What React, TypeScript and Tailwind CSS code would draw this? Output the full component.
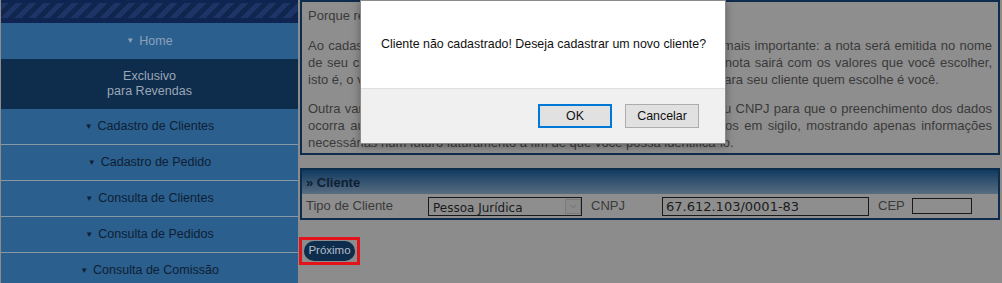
const menu = [
  'Cadastro de Clientes',
  'Cadastro de Pedido',
  'Consulta de Clientes',
  'Consulta de Pedidos',
  'Consulta de Comissão',
]

function Caret() {
  return <span className="mr-[5px] inline-block text-[8px] leading-none align-middle">▼</span>
}

function Line({ children, last }: { children: React.ReactNode; last?: boolean }) {
  return (
    <div className={last ? 'text-left' : 'text-justify [text-align-last:justify]'}>{children}</div>
  )
}

export default function App() {
  return (
    <div
      className="relative flex h-[283px] w-[1002px] overflow-hidden bg-[#8c8c8c] text-[13px]"
      style={{ fontFamily: '"Liberation Sans", Arial, sans-serif' }}
    >
      {/* sidebar */}
      <aside className="ml-px flex w-[297px] shrink-0 flex-col bg-[#2a5f8e] text-[12.5px]">
        <div className="h-[23px] shrink-0 bg-[#0f2450] py-[3px]">
          <div className="h-[15px] bg-[image:repeating-linear-gradient(135deg,#1c3466_0px,#1c3466_5px,#10264f_5px,#10264f_10px)]" />
        </div>
        <div className="flex h-[36px] shrink-0 items-center justify-center text-[#8da2b9]">
          <Caret />
          Home
        </div>
        <div className="flex h-[50px] shrink-0 flex-col items-center justify-center bg-[#0e2c4c] leading-[15px] text-[#9ba7b6]">
          <span>Exclusivo</span>
          <span>para Revendas</span>
        </div>
        {menu.map((item) => (
          <div
            key={item}
            className="flex h-[36px] shrink-0 items-center justify-center border-b border-[#8797a6] text-[#0f1e33]"
          >
            <Caret />
            {item}
          </div>
        ))}
      </aside>

      {/* content */}
      <main className="ml-[2px] flex w-[700px] flex-col">
        <section className="h-[155px] shrink-0 border-2 border-[#0e2c4c] bg-[#8e8e8e] px-[6px] pt-[5px] leading-[17px] text-[#3a3a3a]">
          <p>Porque revender com a gente?</p>
          <div className="mt-[13px]">
            <Line>Ao cadastrar seu cliente em nosso sistema, você garante o que há de mais importante: a nota será emitida no nome</Line>
            <Line>de seu cliente e não em seu nome ou de sua empresa. Além disso, a nota sairá com os valores que você escolher,</Line>
            <Line last>isto é, o valor de cada produto e também o total que será apresentado para seu cliente quem escolhe é você.</Line>
          </div>
          <div className="mt-[12px]">
            <Line>Outra vantagem de cadastrar seu cliente é que basta informar o CPF ou CNPJ para que o preenchimento dos dados</Line>
            <Line>ocorra automaticamente. Todos os dados do seu cliente serão mantidos em sigilo, mostrando apenas informações</Line>
            <Line last>necessárias num futuro faturamento a fim de que você possa identificá-lo.</Line>
          </div>
        </section>

        <section className="mt-[13px] h-[52px] shrink-0 border-2 border-[#0e2c4c] bg-[#8e8e8e]">
          <div className="flex h-[24px] items-center bg-linear-to-b from-[#0f3b61] to-[#586d80] px-[4px] pt-[2px] text-[13px] font-bold text-[#0f1e33]">
            » Cliente
          </div>
          <div className="flex h-[24px] items-center px-[4px] text-[#3a3a3a]">
            <span className="w-[122px]">Tipo de Cliente</span>
            <div
              className="flex h-[19px] w-[154px] items-center border border-[#1a1a1a] pl-[4px] text-[12px] text-[#1a1a1a]"
              style={{ fontFamily: '"DejaVu Sans", Verdana, sans-serif' }}
            >
              <span className="flex-1 pt-[3px]">Pessoa Jurídica</span>
              <span className="flex h-[15px] w-[16px] items-center justify-center border border-[#7a7a7a] bg-[#8a8a8a] text-[9px] text-[#555]">
                ⌵
              </span>
            </div>
            <span className="ml-[9px] w-[71px]">CNPJ</span>
            <div
              className="flex h-[19px] w-[207px] items-center border border-[#1a1a1a] pl-[3px] pt-[2px] text-[13px] text-[#1c1c1c]"
              style={{ fontFamily: '"DejaVu Sans", Verdana, sans-serif' }}
            >
              67.612.103/0001-83
            </div>
            <span className="ml-[9px] w-[34px]">CEP</span>
            <div className="h-[16px] w-[60px] border border-[#1a1a1a]" />
          </div>
        </section>

        <div className="-ml-px mt-[17px] flex h-[28px] w-[61px] shrink-0 items-center justify-center border-[3px] border-[#e3121b]">
          <button className="h-[20px] w-[51px] rounded-full bg-[#0e2c4c] text-[11.5px] text-[#b4beca]">Próximo</button>
        </div>
      </main>

      {/* confirm dialog */}
      <div className="absolute left-[360px] top-0 flex h-[144px] w-[366px] flex-col border border-[#8a8a8a] bg-white shadow-[0_2px_8px_rgba(0,0,0,0.35)]">
        <div className="flex h-[87px] items-center pl-[20px] text-[12.4px] text-[#111]">
          Cliente não cadastrado! Deseja cadastrar um novo cliente?
        </div>
        <div className="flex flex-1 items-center justify-end gap-[13px] border-t border-[#dfdfdf] bg-[#f0f0f0] pr-[26px]">
          <button className="h-[24px] w-[74px] border-2 border-[#0078d7] bg-[#e1e1e1] text-[12.4px] text-[#111]">OK</button>
          <button className="h-[24px] w-[74px] border border-[#adadad] bg-[#e1e1e1] text-[12.4px] text-[#111]">
            Cancelar
          </button>
        </div>
      </div>
    </div>
  )
}
